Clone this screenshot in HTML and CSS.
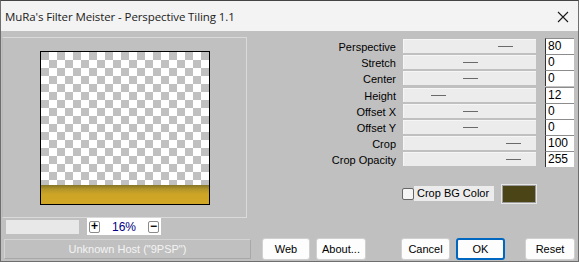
FILE: index.html
```html
<!DOCTYPE html>
<html>
<head>
<meta charset="utf-8">
<link rel="stylesheet" href="styles.css">
</head>
<body>
<div class="window">
  <div class="titlebar">
    <span class="title">MuRa's Filter Meister - Perspective Tiling 1.1</span>
    <svg class="close" width="12" height="12" viewBox="0 0 12 12"><path d="M1 1 L11 11 M11 1 L1 11" stroke="#1a1a1a" stroke-width="1.1" fill="none"/></svg>
  </div>
  <div class="content">
    <div class="top">
      <div class="left">
        <div class="preview">
          <div class="image"><div class="band"></div></div>
        </div>
        <div class="zoomrow">
          <div class="field"></div>
          <div class="zoombox">
            <span class="zbtn">+</span>
            <span class="zval">16%</span>
            <span class="zbtn">−</span>
          </div>
        </div>
      </div>
      <div class="right">
        <div class="grid">
          <span class="lbl">Perspective</span><div class="track"><i class="thumb" style="left:94px"></i></div><div class="box">80</div>
          <span class="lbl">Stretch</span><div class="track"><i class="thumb" style="left:59px"></i></div><div class="box">0</div>
          <span class="lbl">Center</span><div class="track"><i class="thumb" style="left:59px"></i></div><div class="box">0</div>
          <span class="lbl">Height</span><div class="track"><i class="thumb" style="left:27px"></i></div><div class="box">12</div>
          <span class="lbl">Offset X</span><div class="track"><i class="thumb" style="left:59px"></i></div><div class="box">0</div>
          <span class="lbl">Offset Y</span><div class="track"><i class="thumb" style="left:59px"></i></div><div class="box">0</div>
          <span class="lbl">Crop</span><div class="track"><i class="thumb" style="left:102px"></i></div><div class="box">100</div>
          <span class="lbl">Crop Opacity</span><div class="track"><i class="thumb" style="left:102px"></i></div><div class="box">255</div>
        </div>
        <div class="bgrow">
          <span class="check"></span>
          <span class="checklbl">Crop BG Color</span>
          <span class="swatch"></span>
        </div>
      </div>
    </div>
    <div class="bottom">
      <div class="status">Unknown Host ("9PSP")</div>
      <div class="buttons">
        <span class="btn w48">Web</span>
        <span class="btn w50 ml6">About...</span>
        <span class="btn w49 ml35">Cancel</span>
        <span class="btn w49 ml6 ok">OK</span>
        <span class="btn w50 ml20">Reset</span>
      </div>
    </div>
  </div>
</div>
</body>
</html>
```

FILE: styles.css
```css
* { box-sizing: border-box; }
html, body { margin: 0; padding: 0; }
body { width: 579px; height: 262px; overflow: hidden; background: #c0c0c0; }
.window {
  width: 579px; height: 262px;
  border: 1px solid #6e6e6e;
  border-top-color: #444;
  background: #c0c0c0;
  font-family: "Liberation Sans", Arial, sans-serif;
  font-size: 11px;
  color: #000;
  display: flex; flex-direction: column;
}
.titlebar {
  height: 30px;
  background: #f3f3f3;
  display: flex; align-items: center; justify-content: space-between;
  padding: 0 9px 0 4px;
}
.title { font-family: "Open Sans", sans-serif; font-size: 11.5px; color: #1b1b1b; letter-spacing: -0.1px; padding-top: 1px; }
.close { margin-top: 1px; }
.content { flex: 1; display: flex; flex-direction: column; padding: 6px 3px 0 1px; }
.top { display: flex; }
.left { width: 249px; display: flex; flex-direction: column; }
.preview {
  width: 245px; height: 181px;
  border: 1px solid #dadada;
  border-left-color: #b8b8b8;
  display: flex; align-items: center; justify-content: center;
  padding-left: 1px;
}
.image {
  width: 170px; height: 154px;
  border: 1px solid #000;
  background-color: #fff;
  background-image: conic-gradient(#fff 0 25%, #c0c0c0 0 50%, #fff 0 75%, #c0c0c0 0);
  background-size: 16px 16px;
  display: flex; flex-direction: column; justify-content: flex-end;
}
.band { height: 19px; background: linear-gradient(#857528 0, #b1942a 4px, #cda526 9px, #d2a625 100%); }
.zoomrow { display: flex; align-items: center; height: 17px; }
.field { width: 73px; height: 14px; margin-left: 4px; background: #e8e8e8; }
.zoombox {
  width: 74px; height: 17px; margin-left: 8px; background: #fff;
  display: flex; align-items: center; justify-content: space-between; padding: 0 2px;
}
.zbtn {
  width: 11px; height: 12px; border: 1px solid #8a8a8a; border-radius: 2px;
  font-size: 12px; font-weight: bold; line-height: 9px; text-align: center; color: #000;
}
.zval { color: #000080; font-size: 12px; }
.right { flex: 1; display: flex; flex-direction: column; padding-top: 1px; padding-right: 1px; }
.grid {
  display: grid;
  grid-template-columns: 1fr 133px 31px;
  grid-auto-rows: 16.2px;
  column-gap: 7px;
  align-items: center;
}
.lbl { text-align: right; font-size: 11px; color: #000; line-height: 14px; padding-top: 2px; }
.track {
  position: relative; height: 14px; background: #ececec;
  border-top: 1px solid #f6f6f6; border-left: 1px solid #f6f6f6;
}
.thumb { position: absolute; top: 6px; width: 15px; height: 1px; background: #6a6a6a; }
.box {
  margin-left: 2px; height: 16px; background: #fff;
  border-left: 1px solid #333; border-top: 1px solid #8c8c8c;
  font-size: 12px; line-height: 15px; padding-left: 2px; color: #000;
}
.bgrow { display: flex; align-items: center; margin-top: 16px; margin-left: 151px; height: 20px; }
.check { width: 12px; height: 12px; background: #f4f4f4; border: 1px solid #666; border-radius: 2px; }
.checklbl { background: #ececec; height: 15px; line-height: 15px; padding: 0 0 0 3px; width: 80px; font-size: 11px; white-space: nowrap; }
.swatch { width: 36px; height: 20px; margin-left: 7px; background: #4a4417; border: 1px solid #e6e6e6; outline: 1px solid #9a9a9a; outline-offset: -2px; }
.bottom { display: flex; align-items: center; margin-top: 3px; }
.status {
  flex: none;
  width: 247px; height: 20px; margin-left: 2px;
  border: 1px solid #d4d4d4; border-right-color: #a8a8a8; border-bottom-color: #a8a8a8;
  color: #f4f4f4; font-size: 11px; text-align: center; line-height: 18px;
}
.buttons { display: flex; margin-left: 11px; flex: none; }
.btn {
  flex: none;
  height: 22px; background: #fdfdfd; border: 1px solid #d0d0d0; border-radius: 3px;
  font-size: 11px; line-height: 20px; text-align: center; color: #000;
}
.ok { border: 2px solid #0067c0; line-height: 18px; }
.w48 { width: 48px; }
.w49 { width: 49px; }
.w50 { width: 50px; }
.ml6 { margin-left: 6px; }
.ml20 { margin-left: 20px; }
.ml35 { margin-left: 35px; }
```
